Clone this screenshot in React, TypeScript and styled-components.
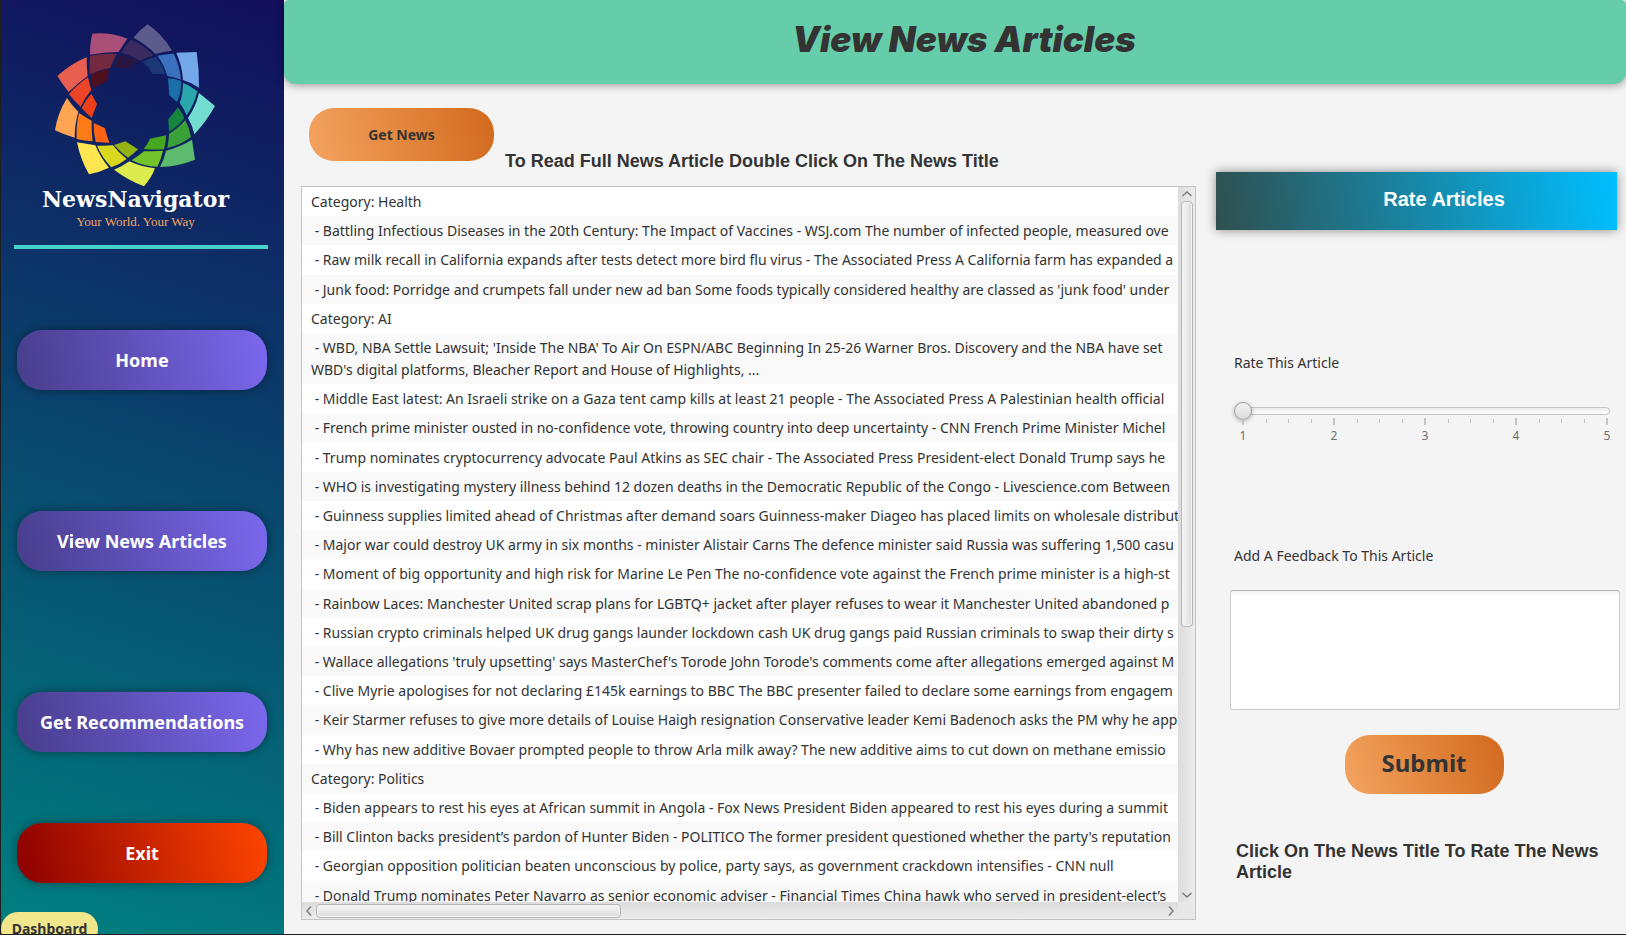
import React, { useState } from "react";
import styled, { createGlobalStyle, css } from "styled-components";

const uiFont = `"Noto Sans", "Open Sans", sans-serif`;
const roundedFont = `"Liberation Sans", Arial, sans-serif`;

const GlobalStyle = createGlobalStyle`
  * { box-sizing: border-box; }
  body {
    margin: 0;
    background: #1e1e1e;
    color: #333333;
    font: 14px/22px ${uiFont};
  }
  button, textarea, input { font: inherit; color: inherit; }
`;

const Window = styled.div`
  display: flex;
  height: 100vh;
  padding: 0 0 1px 1px;
  overflow: hidden;
`;

const Sidebar = styled.aside`
  display: flex;
  flex-direction: column;
  flex: 0 0 283px;
  overflow: hidden;
  background: linear-gradient(17deg, #008080, #120e5c);
`;

const Brand = styled.div`
  display: flex;
  flex-direction: column;
  flex: none;
  align-items: center;
  height: 245px;
  padding: 24px 14px 0 0;
`;

const BrandMark = styled.svg`
  width: 163px;
  height: 163px;
  flex: none;
`;

const BrandName = styled.div`
  color: #ffffff;
  font: 900 22px/24px "DejaVu Serif", serif;
  white-space: nowrap;
`;

const BrandTagline = styled.div`
  color: #f4a460;
  font: 13px/22px "Liberation Serif", serif;
  white-space: nowrap;
`;

const Divider = styled.hr`
  width: 254px;
  height: 4px;
  margin: 0 0 0 13px;
  border: 0;
  background: #48d1cc;
  flex: none;
`;

const Nav = styled.nav`
  display: flex;
  flex-direction: column;
  flex: none;
  gap: 121px;
  padding: 81px 17px 71px 16px;
`;

const NavButton = styled.button<{ $danger?: boolean }>`
  flex: none;
  height: 60px;
  padding: 0;
  border: 0;
  border-radius: 25px;
  color: #ffffff;
  font-size: 18px;
  font-weight: 700;
  background: ${(p) =>
    p.$danger
      ? "linear-gradient(76deg, #8b0000, #ff4500)"
      : "linear-gradient(76deg, #483d8b, #7b68ee)"};
  box-shadow: 0 0 10px rgba(0, 0, 0, 0.4);
  ${(p) => p.$danger && css`margin: 0 17px 29px 16px;`}
`;

const DashboardTag = styled.button`
  flex: none;
  align-self: flex-start;
  width: 97px;
  height: 34px;
  padding: 0;
  border: 0;
  border-radius: 17px;
  background: #f0e68c;
  font-size: 14px;
  font-weight: 700;
`;

const Main = styled.main`
  display: flex;
  flex-direction: column;
  flex: 1;
  min-width: 0;
  background: #f4f4f4;
`;

const Header = styled.header`
  height: 84px;
  flex: none;
  padding: 16px 0 0 18px;
  border-radius: 5px 5px 12px 12px;
  background: #66cdaa;
  box-shadow: 0 1px 10px rgba(0, 0, 0, 0.4);
  text-align: center;
`;

const Title = styled.h1`
  margin: 0;
  font: italic 900 35px/46px Inter, sans-serif;
`;

const Content = styled.div`
  display: flex;
  flex: 1;
  min-height: 0;
`;

const NewsColumn = styled.section`
  display: flex;
  flex-direction: column;
  flex: 1;
  min-width: 0;
  padding: 24px 0 14px 17px;
`;

const Toolbar = styled.div`
  display: flex;
  gap: 11px;
  height: 78px;
  padding-left: 8px;
  flex: none;
`;

const ActionButton = styled.button<{ $large?: boolean }>`
  flex: none;
  width: ${(p) => (p.$large ? 159 : 185)}px;
  height: ${(p) => (p.$large ? 59 : 53)}px;
  padding: ${(p) => (p.$large ? "0 0 4px" : "0")};
  border: 0;
  border-radius: 25px;
  background: linear-gradient(${(p) => (p.$large ? 70 : 74)}deg, #f4a460, #d2691e);
  font-size: ${(p) => (p.$large ? 24 : 14)}px;
  font-weight: 700;
`;

const Hint = styled.p`
  margin: 0;
  font: 700 18px/21px ${roundedFont};
`;

const ToolbarHint = styled(Hint)`
  padding-top: 43px;
  white-space: nowrap;
`;

const ListBox = styled.div`
  display: grid;
  grid-template: minmax(0, 1fr) 17px / minmax(0, 1fr) 17px;
  flex: 1;
  min-height: 0;
  border: 1px solid #c4c4c4;
  background: #e8e8e8;
`;

const Rows = styled.ul`
  margin: 0;
  padding: 0;
  list-style: none;
  overflow: hidden;
  background: #ffffff;
`;

const Row = styled.li`
  padding: 4px 9px 3px;
  white-space: pre;
  background: #ffffff;

  &:nth-child(even) { background: #f9f9f9; }
  &:nth-child(5n + 3) { padding-bottom: 4px; }
`;

const ScrollBar = styled.div<{ $vertical?: boolean }>`
  display: flex;
  flex-direction: ${(p) => (p.$vertical ? "column" : "row")};
  justify-content: space-between;
  padding: ${(p) => (p.$vertical ? "0 2px 0 3px" : "2px 0 1px")};
  background: linear-gradient(${(p) => (p.$vertical ? "to right" : "to bottom")}, #dcdcdc, #ececec);
`;

const ScrollArrow = styled.button<{ $vertical?: boolean }>`
  display: flex;
  align-items: center;
  justify-content: center;
  width: ${(p) => (p.$vertical ? 12 : 14)}px;
  height: 14px;
  padding: 0;
  border: 0;
  background: none;
  flex: none;
`;

const ScrollTrack = styled.div<{ $vertical?: boolean }>`
  display: flex;
  flex-direction: ${(p) => (p.$vertical ? "column" : "row")};
  flex: 1;
`;

const ScrollThumb = styled.div<{ $vertical?: boolean }>`
  ${(p) => (p.$vertical ? "height: 62%;" : "width: 36%;")}
  flex: none;
  border: 1px solid #b6b6b6;
  border-radius: 4px;
  background: linear-gradient(${(p) => (p.$vertical ? "to right" : "to bottom")}, #f6f6f6, #dcdcdc);
  box-shadow: inset 0 0 0 1px #f4f4f4;
`;

const RatePanel = styled.aside`
  display: flex;
  flex-direction: column;
  flex: 0 0 430px;
  padding: 88px 6px 0 34px;
`;

const RateBanner = styled.h2`
  height: 58px;
  margin: 0 3px 0 -14px;
  padding: 1px 0 5px 55px;
  background: linear-gradient(82deg, #2f4f4f, #00bfff);
  box-shadow: 0 0 10px rgba(0, 0, 0, 0.45);
  color: #ffffff;
  font: 700 20px/52px ${roundedFont};
  text-align: center;
`;

const FieldLabel = styled.label`
  display: block;
  padding-left: 4px;
`;

const RateField = styled.div`
  padding-top: 122px;
`;

const Slider = styled.div`
  display: grid;
  width: 382px;
  margin: 28px 0 0 4px;
`;

const SliderRail = styled.span`
  grid-area: 1 / 1;
  align-self: center;
  height: 8px;
  margin: 0 6px 0 2px;
  border: 1px solid #c4c4c4;
  border-radius: 4px;
  background: linear-gradient(#ececec, #ffffff);
`;

const SliderInput = styled.input`
  grid-area: 1 / 1;
  width: 100%;
  height: 18px;
  margin: 0;
  appearance: none;
  background: transparent;

  &::-webkit-slider-thumb {
    appearance: none;
    width: 18px;
    height: 18px;
    border: 1px solid #9c9c9c;
    border-radius: 50%;
    background: linear-gradient(#f2f2f2, #dcdcdc);
    box-shadow: 0 1px 4px rgba(0, 0, 0, 0.3);
  }
`;

const Ticks = styled.div`
  display: flex;
  justify-content: space-between;
  height: 7px;
  padding: 0 8px;
  margin-top: -2px;
`;

const Tick = styled.span<{ $major: boolean }>`
  width: ${(p) => (p.$major ? 2 : 1)}px;
  height: ${(p) => (p.$major ? 7 : 4)}px;
  margin-top: ${(p) => (p.$major ? 0 : 1)}px;
  background: #c4c4c4;
`;

const TickLabels = styled.div`
  display: flex;
  justify-content: space-between;
  color: #707070;
  font-size: 12px;

  span { width: 18px; text-align: center; }
`;

const FeedbackField = styled.div`
  padding-top: 98px;
`;

const FeedbackBox = styled.textarea`
  display: block;
  width: 100%;
  height: 120px;
  margin-top: 23px;
  border: 1px solid #cccccc;
  border-top-color: #b4b4b4;
  border-radius: 3px;
  background: linear-gradient(#f2f2f2, #ffffff 5px);
  resize: none;
`;

const SubmitRow = styled.div`
  display: flex;
  justify-content: center;
  padding: 25px 2px 0 0;
`;

const PanelHint = styled(Hint)`
  padding: 47px 0 0 6px;
`;

const petals: [string, string][] = [
  ["#5d5a8c", "M443 72Q486 100 516 151Q490 153 466 161Q440 133 400 112Q420 88 443 72Z"],
  ["#73a9e8", "M529 157L590 155Q598 210 597 262Q575 247 549 239Q546 195 529 157Z"],
  ["#72ddd0", "M597 278L645 317Q620 362 583 402Q577 375 564 353Q588 318 597 278Z"],
  ["#5cbb6c", "M576 418L585 478Q535 498 480 500Q493 475 498 451Q540 440 576 418Z"],
  ["#dceb4e", "M388 483Q425 500 465 504Q455 532 432 558Q385 540 342 508Q368 498 388 483Z"],
  ["#ffe54f", "M231 426Q260 431 286 435Q300 470 327 502Q300 515 267 522Q242 480 231 426Z"],
  ["#ffa553", "M201 293Q215 315 235 334Q224 372 224 412Q193 404 165 390Q172 340 201 293Z"],
  ["#e85f50", "M260 171Q259 198 263 227Q235 247 206 275Q187 252 172 227Q213 190 260 171Z"],
  ["#a94f78", "M277 100Q330 95 382 115Q368 135 356 155Q312 155 270 163Q270 125 277 100Z"],
  ["#3a2a5e", "M393 118Q433 135 461 165Q440 172 420 182Q395 165 362 157Q375 135 393 118Z"],
  ["#3a70bd", "M472 166Q497 161 521 160Q539 195 543 238Q523 230 502 227Q493 195 472 166Z"],
  ["#28a6aa", "M549 247Q570 255 592 273Q583 312 560 345Q552 325 539 308Q549 280 549 247Z"],
  ["#39a138", "M556 360Q568 383 573 410Q540 435 502 443Q506 420 507 400Q533 385 556 360Z"],
  ["#72c42b", "M432 453Q462 453 489 451Q483 478 472 499Q433 499 395 480Q414 468 432 453Z"],
  ["#d9d81f", "M291 436Q315 437 339 435Q355 457 380 476Q360 492 334 501Q305 470 291 436Z"],
  ["#ff7b16", "M237 338Q255 350 275 361Q274 390 278 423Q253 422 230 416Q228 375 237 338Z"],
  ["#ec4426", "M264 231Q268 250 274 269Q256 290 242 319Q223 303 207 281Q235 250 264 231Z"],
  ["#732a40", "M270 167Q310 158 350 161Q338 182 332 202Q300 207 269 222Q268 190 270 167Z"],
  ["#281640", "M357 164Q387 168 413 183L387 207L341 201Q347 180 357 164Z"],
  ["#1b3775", "M428 184Q448 173 468 169Q487 192 496 222L458 221Q445 198 428 184Z"],
  ["#1a6fa9", "M504 234Q525 235 543 242Q545 275 531 305L508 285Z"],
  ["#15843c", "M534 321Q546 336 553 354Q533 380 507 394L505 357Z"],
  ["#46a81e", "M450 415L498 405Q498 428 492 447Q461 449 431 446Q443 432 450 415Z"],
  ["#93b313", "M376 423L414 447Q399 462 384 472Q360 455 342 434Z"],
  ["#ff6415", "M281 368L314 383Q320 405 328 427L287 425Q280 395 281 368Z"],
  ["#ec3f19", "M274 280L291 311L275 353Q258 338 245 323Q256 298 274 280Z"],
  ["#4f0f1f", "M273 222Q300 210 328 207L321 242L279 264Q273 240 273 222Z"],
];

const rows = [
  "Category: Health",
  " - Battling Infectious Diseases in the 20th Century: The Impact of Vaccines - WSJ.com The number of infected people, measured ove",
  " - Raw milk recall in California expands after tests detect more bird flu virus - The Associated Press A California farm has expanded a",
  " - Junk food: Porridge and crumpets fall under new ad ban Some foods typically considered healthy are classed as 'junk food' under",
  "Category: AI",
  " - WBD, NBA Settle Lawsuit; 'Inside The NBA' To Air On ESPN/ABC Beginning In 25-26 Warner Bros. Discovery and the NBA have set\nWBD's digital platforms, Bleacher Report and House of Highlights, ...",
  " - Middle East latest: An Israeli strike on a Gaza tent camp kills at least 21 people - The Associated Press A Palestinian health official",
  " - French prime minister ousted in no-confidence vote, throwing country into deep uncertainty - CNN French Prime Minister Michel",
  " - Trump nominates cryptocurrency advocate Paul Atkins as SEC chair - The Associated Press President-elect Donald Trump says he",
  " - WHO is investigating mystery illness behind 12 dozen deaths in the Democratic Republic of the Congo - Livescience.com Between",
  " - Guinness supplies limited ahead of Christmas after demand soars Guinness-maker Diageo has placed limits on wholesale distribut",
  " - Major war could destroy UK army in six months - minister Alistair Carns The defence minister said Russia was suffering 1,500 casu",
  " - Moment of big opportunity and high risk for Marine Le Pen The no-confidence vote against the French prime minister is a high-st",
  " - Rainbow Laces: Manchester United scrap plans for LGBTQ+ jacket after player refuses to wear it Manchester United abandoned p",
  " - Russian crypto criminals helped UK drug gangs launder lockdown cash UK drug gangs paid Russian criminals to swap their dirty s",
  " - Wallace allegations 'truly upsetting' says MasterChef's Torode John Torode's comments come after allegations emerged against M",
  " - Clive Myrie apologises for not declaring £145k earnings to BBC The BBC presenter failed to declare some earnings from engagem",
  " - Keir Starmer refuses to give more details of Louise Haigh resignation Conservative leader Kemi Badenoch asks the PM why he app",
  " - Why has new additive Bovaer prompted people to throw Arla milk away? The new additive aims to cut down on methane emissio",
  "Category: Politics",
  " - Biden appears to rest his eyes at African summit in Angola - Fox News President Biden appeared to rest his eyes during a summit",
  " - Bill Clinton backs president’s pardon of Hunter Biden - POLITICO The former president questioned whether the party's reputation",
  " - Georgian opposition politician beaten unconscious by police, party says, as government crackdown intensifies - CNN null",
  " - Donald Trump nominates Peter Navarro as senior economic adviser - Financial Times China hawk who served in president-elect’s",
];

const arrowPaths = {
  up: "M1.5 8L6 4L10.5 8",
  down: "M1.5 4L6 8L10.5 4",
  left: "M8 1.5L4 6L8 10.5",
  right: "M4 1.5L8 6L4 10.5",
};

function Arrow({ dir }: { dir: keyof typeof arrowPaths }) {
  const vertical = dir === "up" || dir === "down";
  return (
    <ScrollArrow type="button" $vertical={vertical} aria-label={`Scroll ${dir}`}>
      <svg width="12" height="12" viewBox="0 0 12 12" fill="none" stroke="#7c7c7c" strokeWidth="1.5">
        <path d={arrowPaths[dir]} />
      </svg>
    </ScrollArrow>
  );
}

export default function App() {
  const [rating, setRating] = useState(1);
  const [feedback, setFeedback] = useState("");

  return (
    <>
      <GlobalStyle />
      <Window>
        <Sidebar>
          <Brand>
            <BrandMark viewBox="162 71 489 489" aria-hidden="true">
              {petals.map(([fill, d]) => (
                <path key={d} fill={fill} d={d} />
              ))}
            </BrandMark>
            <BrandName>NewsNavigator</BrandName>
            <BrandTagline>Your World. Your Way</BrandTagline>
          </Brand>
          <Divider />
          <Nav>
            <NavButton type="button">Home</NavButton>
            <NavButton type="button">View News Articles</NavButton>
            <NavButton type="button">Get Recommendations</NavButton>
          </Nav>
          <NavButton type="button" $danger>Exit</NavButton>
          <DashboardTag type="button">Dashboard</DashboardTag>
        </Sidebar>
        <Main>
          <Header>
            <Title>View News Articles</Title>
          </Header>
          <Content>
            <NewsColumn>
              <Toolbar>
                <ActionButton type="button">Get News</ActionButton>
                <ToolbarHint>To Read Full News Article Double Click On The News Title</ToolbarHint>
              </Toolbar>
              <ListBox>
                <Rows>
                  {rows.map((text) => (
                    <Row key={text}>{text}</Row>
                  ))}
                </Rows>
                <ScrollBar $vertical>
                  <Arrow dir="up" />
                  <ScrollTrack $vertical>
                    <ScrollThumb $vertical />
                  </ScrollTrack>
                  <Arrow dir="down" />
                </ScrollBar>
                <ScrollBar>
                  <Arrow dir="left" />
                  <ScrollTrack>
                    <ScrollThumb />
                  </ScrollTrack>
                  <Arrow dir="right" />
                </ScrollBar>
              </ListBox>
            </NewsColumn>
            <RatePanel>
              <RateBanner>Rate Articles</RateBanner>
              <RateField>
                <FieldLabel htmlFor="rating">Rate This Article</FieldLabel>
                <Slider>
                  <SliderRail />
                  <SliderInput
                    id="rating"
                    type="range"
                    min={1}
                    max={5}
                    step={1}
                    value={rating}
                    onChange={(e) => setRating(Number(e.target.value))}
                  />
                  <Ticks>
                    {Array.from({ length: 17 }, (_, i) => (
                      <Tick key={i} $major={i % 4 === 0} />
                    ))}
                  </Ticks>
                  <TickLabels>
                    {[1, 2, 3, 4, 5].map((n) => (
                      <span key={n}>{n}</span>
                    ))}
                  </TickLabels>
                </Slider>
              </RateField>
              <FeedbackField>
                <FieldLabel htmlFor="feedback">Add A Feedback To This Article</FieldLabel>
                <FeedbackBox
                  id="feedback"
                  value={feedback}
                  onChange={(e) => setFeedback(e.target.value)}
                />
              </FeedbackField>
              <SubmitRow>
                <ActionButton type="button" $large>Submit</ActionButton>
              </SubmitRow>
              <PanelHint>Click On The News Title To Rate The News Article</PanelHint>
            </RatePanel>
          </Content>
        </Main>
      </Window>
    </>
  );
}
